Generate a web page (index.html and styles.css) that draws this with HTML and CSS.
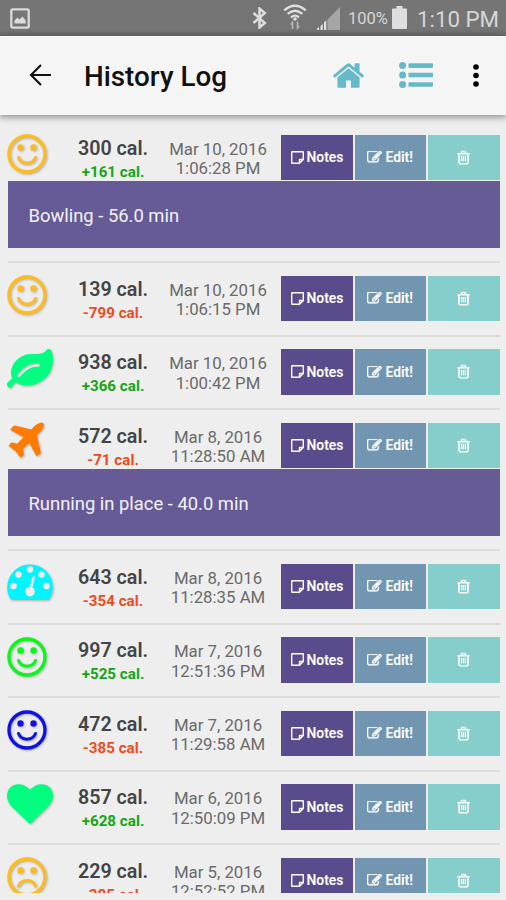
FILE: index.html
```
<!DOCTYPE html>
<html lang="en">
<head>
<meta charset="utf-8">
<title>History Log</title>
<link rel="stylesheet" href="styles.css">
</head>
<body>
<svg class="sprite" aria-hidden="true">
  <symbol id="smile" viewBox="0 0 40 40"><circle cx="20" cy="20" r="18" fill="none" stroke="currentColor" stroke-width="3.400"/><circle cx="13.500" cy="13.500" r="3.200" fill="currentColor"/><circle cx="26.500" cy="13.500" r="3.200" fill="currentColor"/><path d="M11.500 23.500c2.800 7.500 14.200 7.500 17 0" fill="none" stroke="currentColor" stroke-width="3" stroke-linecap="round"/></symbol>
  <symbol id="frown" viewBox="0 0 40 40"><circle cx="20" cy="20" r="18" fill="none" stroke="currentColor" stroke-width="3.400"/><circle cx="13.500" cy="13.500" r="3.200" fill="currentColor"/><circle cx="26.500" cy="13.500" r="3.200" fill="currentColor"/><path d="M11.500 29c2.800-7.500 14.200-7.500 17 0" fill="none" stroke="currentColor" stroke-width="3" stroke-linecap="round"/></symbol>
  <symbol id="leaf" viewBox="0 256 1792 1408" preserveAspectRatio="none"><path fill="currentColor" d="M1280 832q0-26-19-45t-45-19q-172 0-318 49.500t-259.500 134-235.500 219.500q-19 21-19 45 0 26 19 45t45 19q24 0 45-19 27-24 74-71t67-66q137-124 268.500-176t313.500-52q26 0 45-19t19-45zm512-198q0 95-20 193-46 224-184.500 383t-357.500 268q-214 108-438 108-148 0-286-47-15-5-88-42t-96-37q-16 0-39.500 32t-45 70-52.500 70-60 32q-43 0-63.500-17.500t-45.500-59.500q-2-4-6-11t-5.500-10-3-9.500-1.500-13.500q0-35 31-73.500t68-65.500 68-56 31-48q0-4-14-38t-16-44q-9-51-9-104 0-115 43.500-220t119-184.500 170.500-139 204-95.500q55-18 145-25.500t179.500-9 178.500-6 163.500-24 113.500-56.500l29.500-29.500 29.500-28 27-20 36.500-16 43.500-4.500q39 0 70.500 46t47.500 112 24 124 8 96z"/></symbol>
  <symbol id="plane" viewBox="160 128 1440 1408"><path fill="currentColor" d="M1568 160q44 52 12 148t-108 172l-161 161 160 696q5 19-12 33l-128 96q-7 6-19 6-4 0-7-1-15-3-21-16l-279-508-259 259 53 194q5 17-8 31l-96 96q-9 9-23 9h-2q-15-2-24-13l-189-252-252-189q-11-7-13-23-1-13 9-25l96-97q9-9 23-9 6 0 8 1l194 53 259-259-508-279q-14-8-17-24-2-16 9-27l128-128q14-13 30-8l665 159 160-160q76-76 172-108t148 12z"/></symbol>
  <symbol id="gauge" viewBox="0 0 46 37"><path fill="currentColor" d="M3.600 36.200A22.800 22.800 0 1 1 42.400 36.200Q41.800 37 40.800 37H5.200Q4.200 37 3.600 36.200z"/><g fill="#eee"><circle cx="6.500" cy="23" r="3.200"/><circle cx="11.500" cy="11.500" r="3.200"/><circle cx="23" cy="6.500" r="3.200"/><circle cx="34.500" cy="11.500" r="3.200"/><circle cx="39.500" cy="23" r="3.200"/><circle cx="23" cy="28.700" r="4.800"/></g><path d="M23.700 26L26.600 14.200" stroke="#eee" stroke-width="2.600" stroke-linecap="round"/></symbol>
  <symbol id="heart" viewBox="0 128 1792 1536"><path fill="currentColor" d="M896 1664q-26 0-44-18l-624-602q-10-8-27.500-26t-55.500-65.500-68-97.500-53.500-121-23.500-138q0-220 127-344t351-124q62 0 126.500 21.500t120 58 95.500 68.500 76 68q36-36 76-68t95.500-68.500 120-58 126.500-21.500q224 0 351 124t127 344q0 221-229 450l-623 600q-18 18-44 18z"/></symbol>
  <symbol id="home" viewBox="89 250 1614 1286"><path fill="currentColor" d="M1472 992v480q0 26-19 45t-45 19h-384v-384h-256v384h-384q-26 0-45-19t-19-45v-480q0-1 .5-3t.5-3l575-474 575 474q1 2 1 6zm223-69l-62 74q-8 9-21 11h-3q-13 0-21-7l-692-577-692 577q-12 8-24 7-13-2-21-11l-62-74q-8-10-7-23.500t11-21.500l719-599q32-26 76-26t76 26l244 204v-195q0-14 9-23t23-9h192q14 0 23 9t9 23v408l219 182q10 8 11 21.500t-7 23.500z"/></symbol>
  <symbol id="edit" viewBox="0 210 1792 1372"><path fill="currentColor" stroke="currentColor" stroke-width="60" d="M888 1184l116-116-152-152-116 116v56h96v96h56zm440-720q-16-16-33 1l-350 350q-17 17-1 33t33-1l350-350q17-17 1-33zm80 594v190q0 119-84.500 203.500t-203.500 84.500h-832q-119 0-203.500-84.500t-84.500-203.500v-832q0-119 84.500-203.500t203.500-84.500h832q63 0 117 25 15 7 18 23 3 17-9 29l-49 49q-14 14-32 8-23-6-45-6h-832q-66 0-113 47t-47 113v832q0 66 47 113t113 47h832q66 0 113-47t47-113v-126q0-13 9-22l64-64q15-15 35-7t20 29zm-96-738l288 288-672 672h-288v-288zm444 132l-92 92-288-288 92-92q28-28 68-28t68 28l152 152q28 28 28 68t-28 68z"/></symbol>
  <symbol id="note" viewBox="0 0 13 13"><path fill="none" stroke="currentColor" stroke-width="1.400" stroke-linejoin="round" d="M1.300.7h10.400q.6 0 .6.6v7.200l-3.800 3.800H1.300q-.6 0-.6-.6V1.300q0-.6.6-.6zM8.500 12V8.500H12"/></symbol>
  <symbol id="trash" viewBox="0 0 14 15"><path fill="none" stroke="currentColor" stroke-width="1.700" stroke-linejoin="round" d="M.4 3.500h13.200M2.100 3.500v9.200q0 1.500 1.300 1.500h7.200q1.300 0 1.300-1.500V3.500M4.400 3.300L5.200 1h3.600l.8 2.300"/><path stroke="currentColor" stroke-width="1.400" d="M4.900 6v5.500M7 6v5.500M9.100 6v5.500"/></symbol>
</svg>

<div class="status">
  <svg class="st-pic" viewBox="0 0 20 21"><rect x="1.300" y="1.300" width="17.400" height="18.400" rx="1.500" fill="none" stroke="#dadada" stroke-width="2.300"/><path fill="#dadada" d="M4.500 15.500v-3l3-3 2 2 3-3 3.200 4v3z"/></svg>
  <svg class="st-bt" viewBox="0 0 15 22"><path d="M1.500 6l11.300 10L7.500 20.500v-19L12.800 6 1.500 16" fill="none" stroke="#dedede" stroke-width="2.500"/></svg>
  <svg class="st-wifi" viewBox="0 0 24 26"><g fill="none" stroke="#dedede" stroke-width="2.300"><path d="M1.200 6.300q10.800-9.200 21.600 0"/><path d="M4.600 9.900q7.400-6.400 14.800 0"/><path d="M8 13.300q4-3.400 8 0"/></g><circle cx="12" cy="15" r="1.800" fill="#dedede"/><path d="M9.500 25v-6.500L7.800 20.500M14.500 17.500V24l1.800-2" fill="none" stroke="#b5b5b5" stroke-width="1.700"/></svg>
  <svg class="st-sig" viewBox="0 0 23 23"><path fill="#a6a6a6" d="M10.500 23V12.500L23 0v23z"/><path fill="#e2e2e2" d="M0 23v-1.500l2-1.500v3zM3.500 23v-4l2.300-2v6zM7 23v-7.500l2.300-2.300V23z"/></svg>
  <span class="st-pct">100%</span>
  <svg class="st-bat" viewBox="0 0 15 23"><path fill="#dedede" d="M4.500 0h6v2.500H14q1 0 1 1V22q0 1-1 1H1q-1 0-1-1V3.500q0-1 1-1h3.500z"/></svg>
  <span class="st-time">1:10 PM</span>
</div>

<header class="appbar">
  <svg class="back" viewBox="0 0 22 22"><path d="M22 11H2M12 1L2 11l10 10" fill="none" stroke="#111" stroke-width="2.100"/></svg>
  <h1>History Log</h1>
  <svg class="home"><use href="#home"/></svg>
  <svg class="list" viewBox="0 0 34 26"><g fill="#65b9c9"><circle cx="3.600" cy="3.600" r="3.500"/><circle cx="3.600" cy="13" r="3.500"/><circle cx="3.600" cy="22.500" r="3.500"/><rect x="9.500" y="1.300" width="24.500" height="4.600" rx=".8"/><rect x="9.500" y="10.700" width="24.500" height="4.600" rx=".8"/><rect x="9.500" y="20.200" width="24.500" height="4.600" rx=".8"/></g></svg>
  <svg class="more" viewBox="0 0 6 23"><circle cx="3" cy="3" r="2.800"/><circle cx="3" cy="11.500" r="2.800"/><circle cx="3" cy="20" r="2.800"/></svg>
</header>

<main class="log">
  <section class="entry">
    <div class="row"><svg class="mood face amber"><use href="#smile"/></svg><div class="cal"><b>300 cal.</b><em class="up">+161 cal.</em></div><div class="date">Mar 10, 2016<br>1:06:28 PM</div><div class="btns"><a class="notes"><svg><use href="#note"/></svg>Notes</a><a class="edit"><svg><use href="#edit"/></svg>Edit!</a><a class="del"><svg><use href="#trash"/></svg></a></div></div>
    <p class="panel">Bowling - 56.0 min</p>
  </section>
  <section class="entry">
    <div class="row"><svg class="mood face amber"><use href="#smile"/></svg><div class="cal"><b>139 cal.</b><em class="down">-799 cal.</em></div><div class="date">Mar 10, 2016<br>1:06:15 PM</div><div class="btns"><a class="notes"><svg><use href="#note"/></svg>Notes</a><a class="edit"><svg><use href="#edit"/></svg>Edit!</a><a class="del"><svg><use href="#trash"/></svg></a></div></div>
  </section>
  <section class="entry">
    <div class="row"><svg class="mood leaf"><use href="#leaf"/></svg><div class="cal"><b>938 cal.</b><em class="up">+366 cal.</em></div><div class="date">Mar 10, 2016<br>1:00:42 PM</div><div class="btns"><a class="notes"><svg><use href="#note"/></svg>Notes</a><a class="edit"><svg><use href="#edit"/></svg>Edit!</a><a class="del"><svg><use href="#trash"/></svg></a></div></div>
  </section>
  <section class="entry">
    <div class="row"><svg class="mood plane"><use href="#plane"/></svg><div class="cal"><b>572 cal.</b><em class="down">-71 cal.</em></div><div class="date">Mar 8, 2016<br>11:28:50 AM</div><div class="btns"><a class="notes"><svg><use href="#note"/></svg>Notes</a><a class="edit"><svg><use href="#edit"/></svg>Edit!</a><a class="del"><svg><use href="#trash"/></svg></a></div></div>
    <p class="panel">Running in place - 40.0 min</p>
  </section>
  <section class="entry">
    <div class="row"><svg class="mood gauge"><use href="#gauge"/></svg><div class="cal"><b>643 cal.</b><em class="down">-354 cal.</em></div><div class="date">Mar 8, 2016<br>11:28:35 AM</div><div class="btns"><a class="notes"><svg><use href="#note"/></svg>Notes</a><a class="edit"><svg><use href="#edit"/></svg>Edit!</a><a class="del"><svg><use href="#trash"/></svg></a></div></div>
  </section>
  <section class="entry">
    <div class="row"><svg class="mood face green"><use href="#smile"/></svg><div class="cal"><b>997 cal.</b><em class="up">+525 cal.</em></div><div class="date">Mar 7, 2016<br>12:51:36 PM</div><div class="btns"><a class="notes"><svg><use href="#note"/></svg>Notes</a><a class="edit"><svg><use href="#edit"/></svg>Edit!</a><a class="del"><svg><use href="#trash"/></svg></a></div></div>
  </section>
  <section class="entry">
    <div class="row"><svg class="mood face blue"><use href="#smile"/></svg><div class="cal"><b>472 cal.</b><em class="down">-385 cal.</em></div><div class="date">Mar 7, 2016<br>11:29:58 AM</div><div class="btns"><a class="notes"><svg><use href="#note"/></svg>Notes</a><a class="edit"><svg><use href="#edit"/></svg>Edit!</a><a class="del"><svg><use href="#trash"/></svg></a></div></div>
  </section>
  <section class="entry">
    <div class="row"><svg class="mood heart"><use href="#heart"/></svg><div class="cal"><b>857 cal.</b><em class="up">+628 cal.</em></div><div class="date">Mar 6, 2016<br>12:50:09 PM</div><div class="btns"><a class="notes"><svg><use href="#note"/></svg>Notes</a><a class="edit"><svg><use href="#edit"/></svg>Edit!</a><a class="del"><svg><use href="#trash"/></svg></a></div></div>
  </section>
  <section class="entry">
    <div class="row"><svg class="mood face amber"><use href="#frown"/></svg><div class="cal"><b>229 cal.</b><em class="down">-385 cal.</em></div><div class="date">Mar 5, 2016<br>12:52:52 PM</div><div class="btns"><a class="notes"><svg><use href="#note"/></svg>Notes</a><a class="edit"><svg><use href="#edit"/></svg>Edit!</a><a class="del"><svg><use href="#trash"/></svg></a></div></div>
  </section>
</main>
</body>
</html>
```
FILE: styles.css
```
* { box-sizing: border-box; }
body {
  margin: 0;
  width: 506px;
  height: 900px;
  overflow: hidden;
  background: #eee;
  font-family: Roboto, "Liberation Sans", sans-serif;
}
svg { display: block; flex: none; }
.sprite { display: none; }

.status {
  display: flex;
  height: 36px;
  background: #757575;
  color: #d6d6d6;
}
.st-pic { width: 20px; height: 21px; margin: 8px 0 0 10px; }
.st-bt { width: 15px; height: 22px; margin: 7px 0 0 222px; }
.st-wifi { width: 24px; height: 26px; margin: 4px 0 0 16px; }
.st-sig { width: 23px; height: 23px; margin: 7px 0 0 10px; }
.st-pct { width: 40px; margin: 9px 0 0 8px; font-size: 16.500px; line-height: 20px; white-space: nowrap; }
.st-bat { width: 15px; height: 23px; margin: 6px 0 0 4px; }
.st-time { margin: 5px 0 0 10px; font-size: 22.300px; line-height: 28px; white-space: nowrap; }

.appbar {
  position: relative;
  display: flex;
  align-items: center;
  height: 79px;
  padding-bottom: 2px;
  border-top: 1px solid #fff;
  background: #f5f5f5;
  box-shadow: 0 1px 7px 1px rgba(0, 0, 0, .42);
}
.back { width: 22px; height: 22px; margin-left: 29px; }
.appbar h1 {
  width: 148px;
  margin: 3px 0 0 33px;
  font-size: 27.800px;
  font-weight: 500;
  line-height: 32px;
  color: #111;
  white-space: nowrap;
}
.home { width: 31px; height: 25px; margin-left: 101px; color: #65b9c9; }
.list { width: 34px; height: 26px; margin-left: 35px; }
.more { width: 6px; height: 23px; margin-left: 40px; }

.log { height: 778px; padding: 5px 6.500px 0 7.500px; overflow: hidden; }
.entry { border-top: 2px solid #dcdcdc; padding: 12.500px 0 13px; }
.entry:first-child { border-color: transparent; }
.row {
  display: grid;
  grid-template-columns: 60px 91px 119px 3.500px 218px;
  height: 46px;
}
.btns { grid-column: 5; }
.mood { margin: -.5px 0 0 -.5px; filter: drop-shadow(1px 1px 1px rgba(0, 0, 0, .25)); }
.face { width: 40px; height: 40px; }
.leaf { width: 46px; height: 39px; color: #00ff80; }
.plane { width: 36px; height: 36px; margin-left: .5px; color: #ff7a00; }
.gauge { width: 46px; height: 37px; color: #00f6ff; }
.heart { width: 46px; height: 40px; color: #00ff80; }
.amber { color: #fdbb22; }
.green { color: #0df51a; }
.blue { color: #1111e6; }

.cal, .date { text-align: center; white-space: nowrap; }
.cal b {
  display: block;
  padding-top: 2px;
  font-size: 19.700px;
  font-weight: 600;
  line-height: 24px;
  color: #444;
}
.cal em {
  display: block;
  font-size: 15.200px;
  font-style: normal;
  font-weight: 700;
  line-height: 22px;
}
.up { color: #16a516; }
.down { color: #f04a20; }
.date {
  padding-top: 5px;
  font-size: 16.800px;
  line-height: 19.500px;
  color: #6a6a6a;
}
.btns {
  display: grid;
  grid-template-columns: 72px 71.500px 72px;
  gap: 1.500px;
  height: 45.500px;
}
.btns a {
  display: flex;
  align-items: center;
  justify-content: center;
  gap: 3px;
  color: #fff;
  font-size: 13.900px;
  font-weight: 600;
}
.notes { background: #5a4c8c; }
.edit { background: #7295b1; }
.del { background: #86cecb; }
.notes svg { width: 13px; height: 13px; }
.edit svg { width: 15px; height: 12px; }
.del svg { width: 13px; height: 15px; }
.panel {
  margin: .5px 0 0;
  height: 67px;
  padding-left: 21px;
  background: #665a97;
  color: #f4f2fa;
  font-size: 18.400px;
  line-height: 69px;
}
```
